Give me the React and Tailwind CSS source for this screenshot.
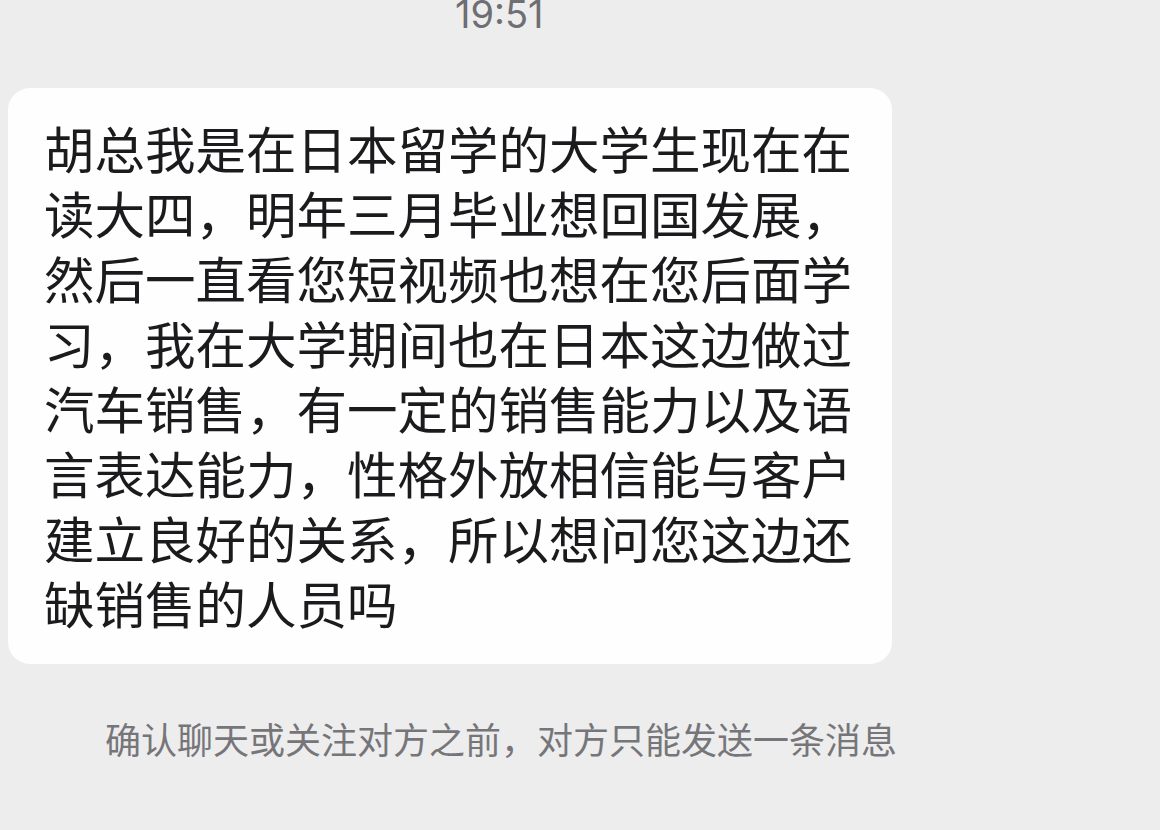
const lines = [
  "胡总我是在日本留学的大学生现在在",
  "读大四，明年三月毕业想回国发展，",
  "然后一直看您短视频也想在您后面学",
  "习，我在大学期间也在日本这边做过",
  "汽车销售，有一定的销售能力以及语",
  "言表达能力，性格外放相信能与客户",
  "建立良好的关系，所以想问您这边还",
  "缺销售的人员吗",
];

const cjk = { fontFamily: '"Noto Sans CJK SC", "Noto Sans", sans-serif' };

export default function App() {
  return (
    <div className="w-[1160px] h-[830px] overflow-hidden bg-[#ededed]">
      {/* time stamp */}
      <div className="h-[40px] pl-[455px] -mt-[6px]">
        <span className="text-[38px] leading-[40px] text-[#6e6e73]" style={{ fontFamily: 'Inter, "Noto Sans", sans-serif' }}>
          19:51
        </span>
      </div>

      {/* message bubble */}
      <div className="mt-[54px] ml-[8px] w-[884px] rounded-[22px] bg-[#fefefe] pl-[36px] pr-[30px] pt-[27px] pb-[29px]">
        <div className="text-[50.5px] leading-[65px] text-[#1b1b1d]" style={cjk}>
          {lines.map((l, i) => (
            <div key={i} className="whitespace-nowrap">{l}</div>
          ))}
        </div>
      </div>

      {/* notice */}
      <div className="mt-[52px] pl-[105px] text-[36px] leading-[44px] text-[#76767a] whitespace-nowrap" style={cjk}>
        确认聊天或关注对方之前，对方只能发送一条消息
      </div>
    </div>
  );
}
